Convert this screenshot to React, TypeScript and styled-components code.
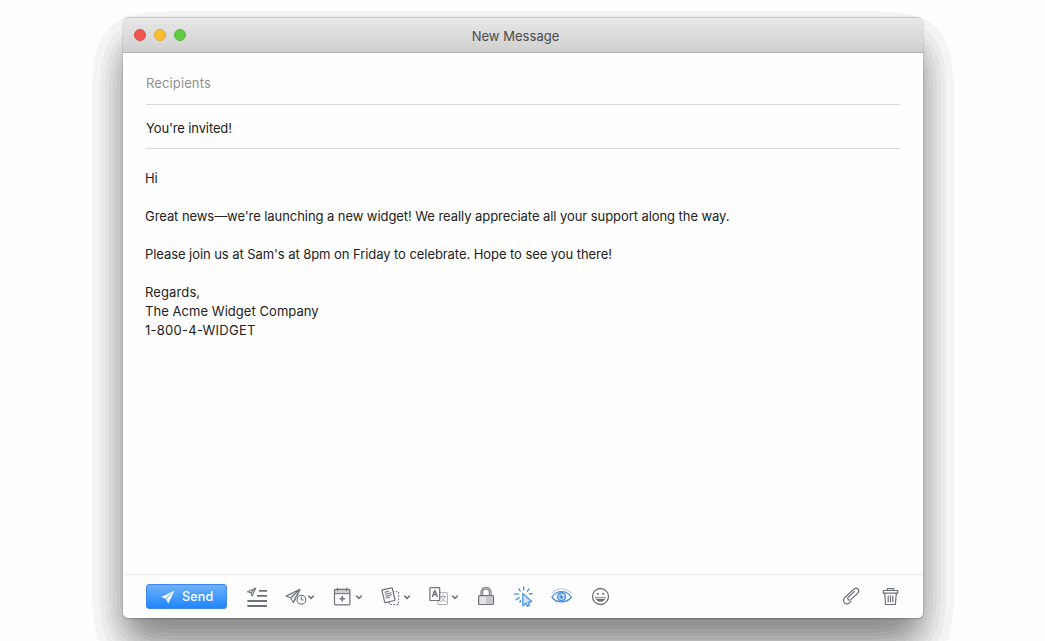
import React from 'react';
import styled, { createGlobalStyle } from 'styled-components';

const ink = '#6d7179';
const blue = '#4a90e2';

const GlobalStyle = createGlobalStyle`
  * { box-sizing: border-box; }
  body {
    margin: 0;
    background: #fefefe;
    overflow: hidden;
    font-family: Inter, 'Liberation Sans', sans-serif;
  }
`;

const Page = styled.main`
  width: 1045px;
  height: 641px;
  padding: 17px 122px 23px 123px;
  background: #fefefe;
  overflow: hidden;
`;

const WindowFrame = styled.div`
  position: relative;
  height: 601px;
`;

const Shadow = styled.div`
  position: absolute;
  inset: 25px 0 -25px;
  border-radius: 5px;
  background: #000;
  filter: url(#stepped-shadow);
`;

const FilterDefs = styled.svg`
  position: absolute;
  width: 0;
  height: 0;
`;

const Window = styled.section`
  position: relative;
  height: 100%;
  display: flex;
  flex-direction: column;
  border-radius: 5px;
  overflow: hidden;
  background: #fefefe;
`;

const WindowEdge = styled.div`
  position: relative;
  height: 100%;
  border-radius: 5px;
  box-shadow: 0 0 1px rgba(0, 0, 0, 0.35), 0 1px 2px rgba(0, 0, 0, 0.18);
`;

const TitleBar = styled.header`
  flex: none;
  height: 36px;
  display: grid;
  grid-template-columns: 1fr auto 1fr;
  align-items: center;
  padding: 1px 26px 0 11px;
  border-top: 1px solid #cdcdcd;
  border-bottom: 1px solid #b5b5b5;
  background: linear-gradient(#e7e7e7, #dcdcdc 50%, #d0d0d0);
`;

const Lights = styled.div`
  display: flex;
  gap: 8px;
  margin-top: -2px;
`;

const Light = styled.span<{ $fill: string; $rim: string }>`
  width: 12px;
  height: 12px;
  border-radius: 50%;
  background: ${(p) => p.$fill};
  border: 1px solid ${(p) => p.$rim};
`;

const Title = styled.h1`
  margin: 1px 0 0;
  font: 400 13px/16px Inter, sans-serif;
  letter-spacing: 0.03px;
  color: #4a4a4a;
`;

const Field = styled.div<{ $height: number; $muted?: boolean }>`
  flex: none;
  height: ${(p) => p.$height}px;
  margin: 0 23px;
  padding-bottom: ${(p) => (p.$muted ? 11 : 10)}px;
  display: flex;
  align-items: flex-end;
  border-bottom: 1px solid #d9d9d9;
  font-size: 13px;
  line-height: 19px;
  letter-spacing: ${(p) => (p.$muted ? 0.12 : -0.12)}px;
  color: ${(p) => (p.$muted ? '#919191' : '#222')};
`;

const Body = styled.div`
  flex: 1;
  padding: 20px 22px;
  font-size: 13px;
  line-height: 19px;
  color: #222;
`;

const Paragraph = styled.p`
  margin: 0 0 19px;
  letter-spacing: -0.067px;
`;

const Signature = styled.address`
  font-style: normal;
`;

const SignatureLine = styled.div<{ $tracking: number }>`
  letter-spacing: ${(p) => p.$tracking}px;
`;

const Toolbar = styled.footer`
  flex: none;
  height: 44px;
  display: flex;
  align-items: center;
  gap: 18px;
  padding: 0 24px 0 23px;
  border-top: 1px solid #ebebeb;
`;

const SendButton = styled.button`
  width: 81px;
  height: 25px;
  display: flex;
  align-items: center;
  gap: 7px;
  padding: 0 0 0 14px;
  border: 1px solid #3d87f5;
  border-radius: 3px;
  background: linear-gradient(#6db1f9, #1f86fb);
  color: #fff;
  font: 500 12.5px/16px Inter, sans-serif;
  letter-spacing: 0.15px;
`;

const Glyph = styled.svg<{ $tint?: string }>`
  flex: none;
  display: block;
  height: 24px;
  overflow: visible;
  fill: none;
  stroke: ${(p) => p.$tint ?? ink};
  stroke-width: 1.2;
  stroke-linecap: round;
  stroke-linejoin: round;
`;

const Spacer = styled.div`
  flex: 1;
`;

const Trailing = styled.div`
  display: flex;
  gap: 22px;
`;

type IconProps = { width: number; tint?: string; children: React.ReactNode };

const Icon = ({ width, tint, children }: IconProps) => (
  <Glyph width={width} viewBox={`0 0 ${width} 24`} $tint={tint} aria-hidden="true">
    {children}
  </Glyph>
);

const Chevron = ({ x }: { x: number }) => (
  <path d={`M${x} 11l2.4 2.3 2.4-2.3`} strokeWidth="1.6" />
);

export default function App() {
  return (
    <Page>
      <GlobalStyle />
      <FilterDefs aria-hidden="true">
        <filter id="stepped-shadow" x="-15%" y="-15%" width="130%" height="130%" colorInterpolationFilters="sRGB">
          <feGaussianBlur stdDeviation="20.5" />
          <feComponentTransfer>
            <feFuncA
              type="discrete"
              tableValues="0 .042 .077 .112 .147 .182 .215 .25 .282 .315 .345 .375 .4 .42 .44 .46"
            />
          </feComponentTransfer>
        </filter>
      </FilterDefs>
      <WindowFrame>
        <Shadow />
        <WindowEdge>
          <Window>
            <TitleBar>
              <Lights>
                <Light $fill="#f0574f" $rim="#dd4a45" />
                <Light $fill="#fabd2f" $rim="#dfa632" />
                <Light $fill="#62cb44" $rim="#55b53b" />
              </Lights>
              <Title>New Message</Title>
            </TitleBar>
            <Field $height={52} $muted>Recipients</Field>
            <Field $height={44}>You're invited!</Field>
            <Body>
              <Paragraph>Hi</Paragraph>
              <Paragraph>
                Great news—we're launching a new widget! We really appreciate all your support along the way.
              </Paragraph>
              <Paragraph>
                Please join us at Sam's at 8pm on Friday to celebrate. Hope to see you there!
              </Paragraph>
              <Signature>
                <SignatureLine $tracking={0.12}>Regards,</SignatureLine>
                <SignatureLine $tracking={0.05}>The Acme Widget Company</SignatureLine>
                <SignatureLine $tracking={0.26}>1-800-4-WIDGET</SignatureLine>
              </Signature>
            </Body>
            <Toolbar>
              <SendButton>
                <svg width="14" height="14" viewBox="0 0 14 14" fill="#fff" aria-hidden="true">
                  <path d="M13.6.5.3 7.100l3.900 1.600zM13.600.5 5.100 9.200l2.200 4.300z" />
                </svg>
                Send
              </SendButton>
              <Icon width={22}>
                <path d="M2.6 6.6 10.8 3 7.2 11.2 6 8z M6 8l4.8-5" fill="#c9cbce" strokeWidth="1" />
                <path d="M14 5.8h8M12 10.8h10M2.4 16h19.6M2.4 21h19.6" strokeWidth="1.8" strokeLinecap="butt" />
              </Icon>
              <Icon width={30}>
                <path d="M1 11 15 4.2 12.4 10.4M1 11l4.6 1.8L8.3 17.6l2.3-3.6M5.6 12.8 15 4.2 8.3 17.6" fill="#d8dadc" strokeWidth="1.1" />
                <circle cx="16.4" cy="14.7" r="4.4" fill="#fefefe" strokeWidth="1.1" />
                <path d="M16.3 12v3h2" strokeWidth="1" />
                <Chevron x={23.6} />
              </Icon>
              <Icon width={30}>
                <path d="M1.6 4.5h15.2v4.3H1.6z" fill="#cfd0d2" stroke="none" />
                <rect x="1.5" y="4.3" width="15.4" height="15.5" rx="1" />
                <path d="M1.5 8.7h15.4M4.7 3v2.6M13.7 3v2.6" strokeWidth="1" />
                <path d="M9.3 11v5.6M6.5 13.8h5.6" strokeWidth="1.6" strokeLinecap="butt" />
                <Chevron x={23.5} />
              </Icon>
              <Icon width={30}>
                <rect x="8.3" y="6.7" width="9.3" height="12.8" strokeWidth="1" strokeDasharray="1.8 1.4" strokeLinecap="butt" />
                <g transform="rotate(-13 7.5 10.2)">
                  <rect x="2.2" y="3.7" width="10.6" height="13" rx=".6" fill="#fefefe" />
                  <path d="M4.6 6.5h4M4.6 8.5h6M4.6 10.5h6M4.6 12.5h3.6" strokeWidth="1" />
                </g>
                <Chevron x={23.6} />
              </Icon>
              <Icon width={30}>
                <rect x="9" y="7.7" width="9.4" height="11.9" rx=".5" stroke="#a9abb0" strokeWidth="1" />
                <path d="M11.4 11.5h5.4M14 10v1.4M16 11.6c-.5 2.3-2 4-4.4 5M12 12c.8 2 2.2 3.6 4.6 4.6" stroke="#a0a2a8" strokeWidth=".9" />
                <rect x=".9" y="2.6" width="9.8" height="12.9" rx=".6" fill="#fefefe" />
                <path d="M3.4 11.4 5.8 5.6l2.4 5.8M4.2 9.6h3.2" strokeWidth="1.4" />
                <Chevron x={23.5} />
              </Icon>
              <Icon width={18}>
                <path d="M4.8 10.7V7.4a4.2 4.2 0 0 1 8.4 0v3.3" strokeWidth="2.8" strokeLinecap="butt" />
                <path d="M4.8 10.7V7.4a4.2 4.2 0 0 1 8.4 0v3.3" stroke="#e3e4e5" strokeWidth=".8" strokeLinecap="butt" />
                <rect x="1.6" y="10.6" width="14.9" height="8.9" rx="1" fill="#e2e3e4" />
                <path d="M9 11.2h6.9v7.7H9z" fill="#c6c8cb" stroke="none" />
              </Icon>
              <Icon width={20} tint={blue}>
                <path d="M9.8 8.4v12.5l3-2.7 1.7 3.2 2.1-1.1-1.6-3 4-.6z" fill="#cfe2f8" strokeWidth="1.2" />
                <path d="M10.7 2v3M5.7 3.700l1.500 2.500M16 3.900l-1.700 2.400M1.500 8.900l4 .3M16.300 9l3-.3M3.200 14.600l2.900-2.100M7 17.300l.5-1.800" strokeWidth="1.3" />
              </Icon>
              <Icon width={22} tint={blue}>
                <path d="M.9 12C3.4 8.4 6.8 6.7 10.6 6.7S17.8 8.4 20.3 12c-2.5 3.5-5.9 4.9-9.7 4.9S3.4 15.5.9 12z" strokeWidth="1.3" />
                <path d="M1.6 7.4C4.2 5 7.2 3.7 10.6 3.7s6.4 1.3 9 3.7" stroke="#a9cbf2" strokeWidth="1.1" />
                <circle cx="10.6" cy="11.8" r="4" fill="#a9cdf5" strokeWidth="1.4" />
                <circle cx="10.6" cy="11.8" r="1.7" fill={blue} stroke="none" />
                <path d="M11.5 9.5v1.3h1.3" stroke="#fff" strokeWidth=".9" />
              </Icon>
              <Icon width={19}>
                <circle cx="9.5" cy="11.5" r="8" strokeWidth="1.3" />
                <path d="M4.6 12.3h9.8c-.3 2.7-2.3 4.3-4.9 4.3s-4.6-1.6-4.9-4.3z" fill={ink} strokeWidth=".5" />
                <path d="M5.7 13.3h7.6" stroke="#fefefe" strokeWidth="1" />
                <circle cx="6.8" cy="8.8" r="1.1" fill={ink} stroke="none" />
                <circle cx="12.2" cy="8.8" r="1.1" fill={ink} stroke="none" />
              </Icon>
              <Spacer />
              <Trailing>
                <Icon width={18}>
                  <path d="M6.4 14.7a1.7 1.7 0 0 1-.1-2.5l6.1-5.6M6.4 14.7c.7.6 1.7.5 2.4-.1l6.9-6.4c1.3-1.3 1.4-3 .3-4.1s-2.8-1.1-4.1.1L3 12.2c-1.8 1.8-1.9 4.2-.5 5.6s3.5 1.3 5.2-.3l1.2-1.1" />
                </Icon>
                <Icon width={17}>
                  <path d="M5.3 5.3V3.6h6.4v1.7M1.3 5.5h14.4v2.7H1.3zM2.7 8.2l.9 11.3h9.8l.9-11.3" />
                  <path d="M6.2 10.5v6.7M8.5 10.5v6.7M10.8 10.5v6.7" strokeLinecap="butt" />
                </Icon>
              </Trailing>
            </Toolbar>
          </Window>
        </WindowEdge>
      </WindowFrame>
    </Page>
  );
}
